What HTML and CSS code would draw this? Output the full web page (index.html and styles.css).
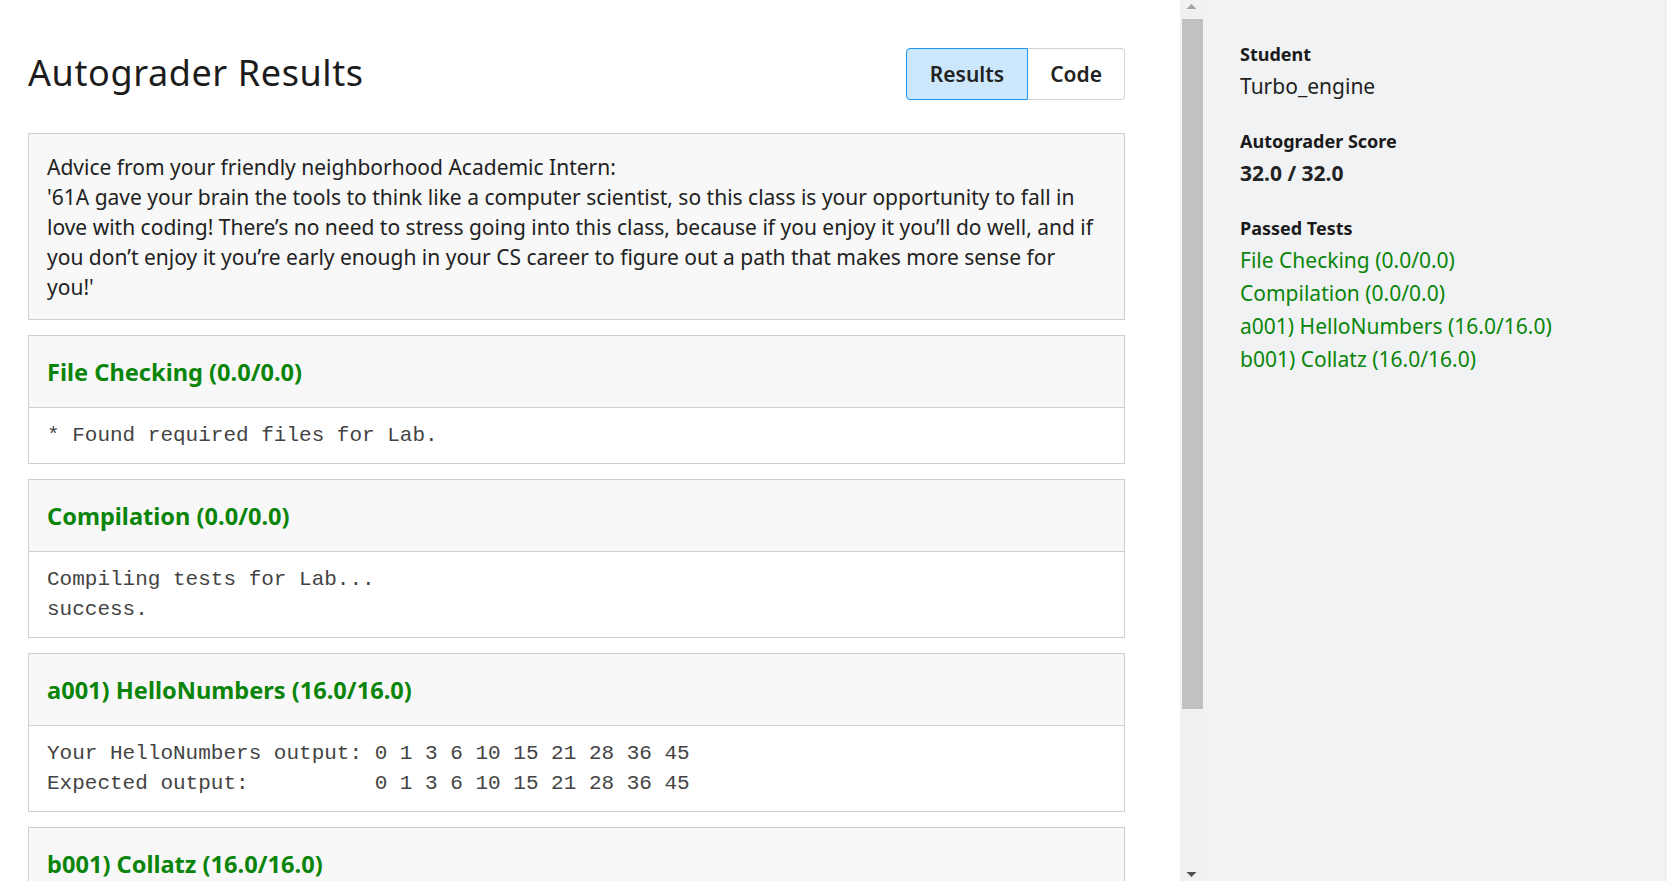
FILE: index.html
```html
<!DOCTYPE html>
<html lang="en">
<head>
<meta charset="utf-8">
<title>Autograder Results</title>
<link rel="stylesheet" href="styles.css">
</head>
<body>
<div class="layout">
  <main class="main-pane">
    <div class="page-header">
      <h1 class="page-title">Autograder Results</h1>
      <div class="toggle-group">
        <button class="toggle-btn toggle-btn--active">Results</button>
        <button class="toggle-btn">Code</button>
      </div>
    </div>

    <div class="advice-box">Advice from your friendly neighborhood Academic Intern:<br>'61A gave your brain the tools to think like a computer scientist, so this class is your opportunity to fall in love with coding! There’s no need to stress going into this class, because if you enjoy it you’ll do well, and if you don’t enjoy it you’re early enough in your CS career to figure out a path that makes more sense for you!'</div>

    <section class="test-panel">
      <div class="test-header"><h2 class="test-title">File Checking (0.0/0.0)</h2></div>
      <pre class="test-output">* Found required files for Lab.</pre>
    </section>

    <section class="test-panel">
      <div class="test-header"><h2 class="test-title">Compilation (0.0/0.0)</h2></div>
      <pre class="test-output">Compiling tests for Lab...
success.</pre>
    </section>

    <section class="test-panel">
      <div class="test-header"><h2 class="test-title">a001) HelloNumbers (16.0/16.0)</h2></div>
      <pre class="test-output">Your HelloNumbers output: 0 1 3 6 10 15 21 28 36 45
Expected output:          0 1 3 6 10 15 21 28 36 45</pre>
    </section>

    <section class="test-panel">
      <div class="test-header"><h2 class="test-title">b001) Collatz (16.0/16.0)</h2></div>
      <pre class="test-output">Your Collatz sequence:   5 16 8 4 2 1
Expected sequence:       5 16 8 4 2 1</pre>
    </section>
  </main>

  <div class="scrollbar" aria-hidden="true">
    <div class="scroll-btn">
      <svg width="23" height="19" viewBox="0 0 23 19"><polygon points="6.5,9 16.5,9 11.5,4" fill="#a3a3a3"/></svg>
    </div>
    <div class="scroll-thumb"></div>
    <div class="scroll-track"></div>
    <div class="scroll-btn">
      <svg width="23" height="19" viewBox="0 0 23 19"><polygon points="6.5,10 16.5,10 11.5,15" fill="#4f4f4f"/></svg>
    </div>
  </div>

  <aside class="sidebar">
    <div class="side-section">
      <div class="side-label">Student</div>
      <div class="side-value">Turbo_engine</div>
    </div>
    <div class="side-section">
      <div class="side-label">Autograder Score</div>
      <div class="side-value side-value--bold">32.0 / 32.0</div>
    </div>
    <div class="side-section">
      <div class="side-label">Passed Tests</div>
      <ul class="side-links">
        <li><a class="side-link" href="#">File Checking (0.0/0.0)</a></li>
        <li><a class="side-link" href="#">Compilation (0.0/0.0)</a></li>
        <li><a class="side-link" href="#">a001) HelloNumbers (16.0/16.0)</a></li>
        <li><a class="side-link" href="#">b001) Collatz (16.0/16.0)</a></li>
      </ul>
    </div>
  </aside>
</div>
</body>
</html>
```

FILE: styles.css
```css
* {
  box-sizing: border-box;
}

html, body {
  margin: 0;
  padding: 0;
  height: 100%;
}

body {
  font-family: "Noto Sans", "Open Sans", sans-serif;
  color: #212121;
  background: #ffffff;
  overflow: hidden;
}

.layout {
  display: flex;
  height: 100vh;
}

.main-pane {
  flex: 1;
  min-width: 0;
  overflow: hidden;
  padding: 48px 55px 30px 28px;
}

/* scrollbar column */
.scrollbar {
  width: 23px;
  flex-shrink: 0;
  display: flex;
  flex-direction: column;
  background: #f1f1f1;
}

.scroll-btn {
  height: 19px;
  flex-shrink: 0;
}

.scroll-btn svg {
  display: block;
}

.scroll-thumb {
  height: 690px;
  flex-shrink: 0;
  margin-left: 2px;
  background: #c1c1c1;
}

.scroll-track {
  flex: 1;
}

.page-header {
  display: flex;
  align-items: center;
  justify-content: space-between;
  height: 52px;
  margin-bottom: 33px;
}

.page-title {
  margin: 0 0 3px 0;
  font-size: 36px;
  font-weight: 400;
  color: #1c1c1c;
  letter-spacing: 0.6px;
}

.toggle-group {
  display: flex;
  height: 52px;
}

.toggle-btn {
  font-family: "Noto Sans", sans-serif;
  font-size: 21px;
  font-weight: 600;
  color: #222;
  background: #fff;
  border: 1px solid #d3d3d3;
  padding: 0 22px;
  height: 52px;
  margin: 0;
  cursor: pointer;
}

.toggle-btn:first-child {
  border-radius: 4px 0 0 4px;
}

.toggle-btn:last-child {
  border-radius: 0 4px 4px 0;
  border-left: 0;
}

.toggle-btn--active {
  background: #cce7fb;
  border-color: #2196f3;
  padding: 0 23px;
}

.advice-box {
  background: #f8f8f8;
  border: 1px solid #cfcfcf;
  padding: 18px 18px 17px 18px;
  font-size: 21px;
  line-height: 30px;
  color: #222;
  margin-bottom: 15px;
}

.test-panel {
  border: 1px solid #cfcfcf;
  margin-bottom: 15px;
  background: #fff;
}

.test-header {
  background: #f8f8f8;
  border-bottom: 1px solid #cfcfcf;
  padding: 22px 18px 20px 18px;
}

.test-title {
  margin: 0;
  font-size: 23.6px;
  line-height: 29px;
  font-weight: 700;
  color: #0a850a;
}

.test-output {
  margin: 0;
  padding: 13px 18px 12px 18px;
  font-family: "Liberation Mono", "Courier New", monospace;
  font-size: 21px;
  line-height: 30px;
  color: #444;
  white-space: pre;
}

.sidebar {
  width: 464px;
  flex-shrink: 0;
  background: #f1f2f4;
  padding: 40px 20px 20px 37px;
}

.side-section {
  margin-bottom: 24px;
}

.side-label {
  font-size: 18px;
  line-height: 28px;
  font-weight: 700;
  color: #1a1a1a;
  margin-bottom: 2px;
}

.side-value {
  font-size: 21px;
  line-height: 33px;
  color: #222;
}

.side-value--bold {
  font-weight: 700;
}

.side-links {
  list-style: none;
  margin: 0;
  padding: 0;
}

.side-links li {
  font-size: 21px;
  line-height: 33px;
}

.side-link {
  color: #0a850a;
  text-decoration: none;
}
```
